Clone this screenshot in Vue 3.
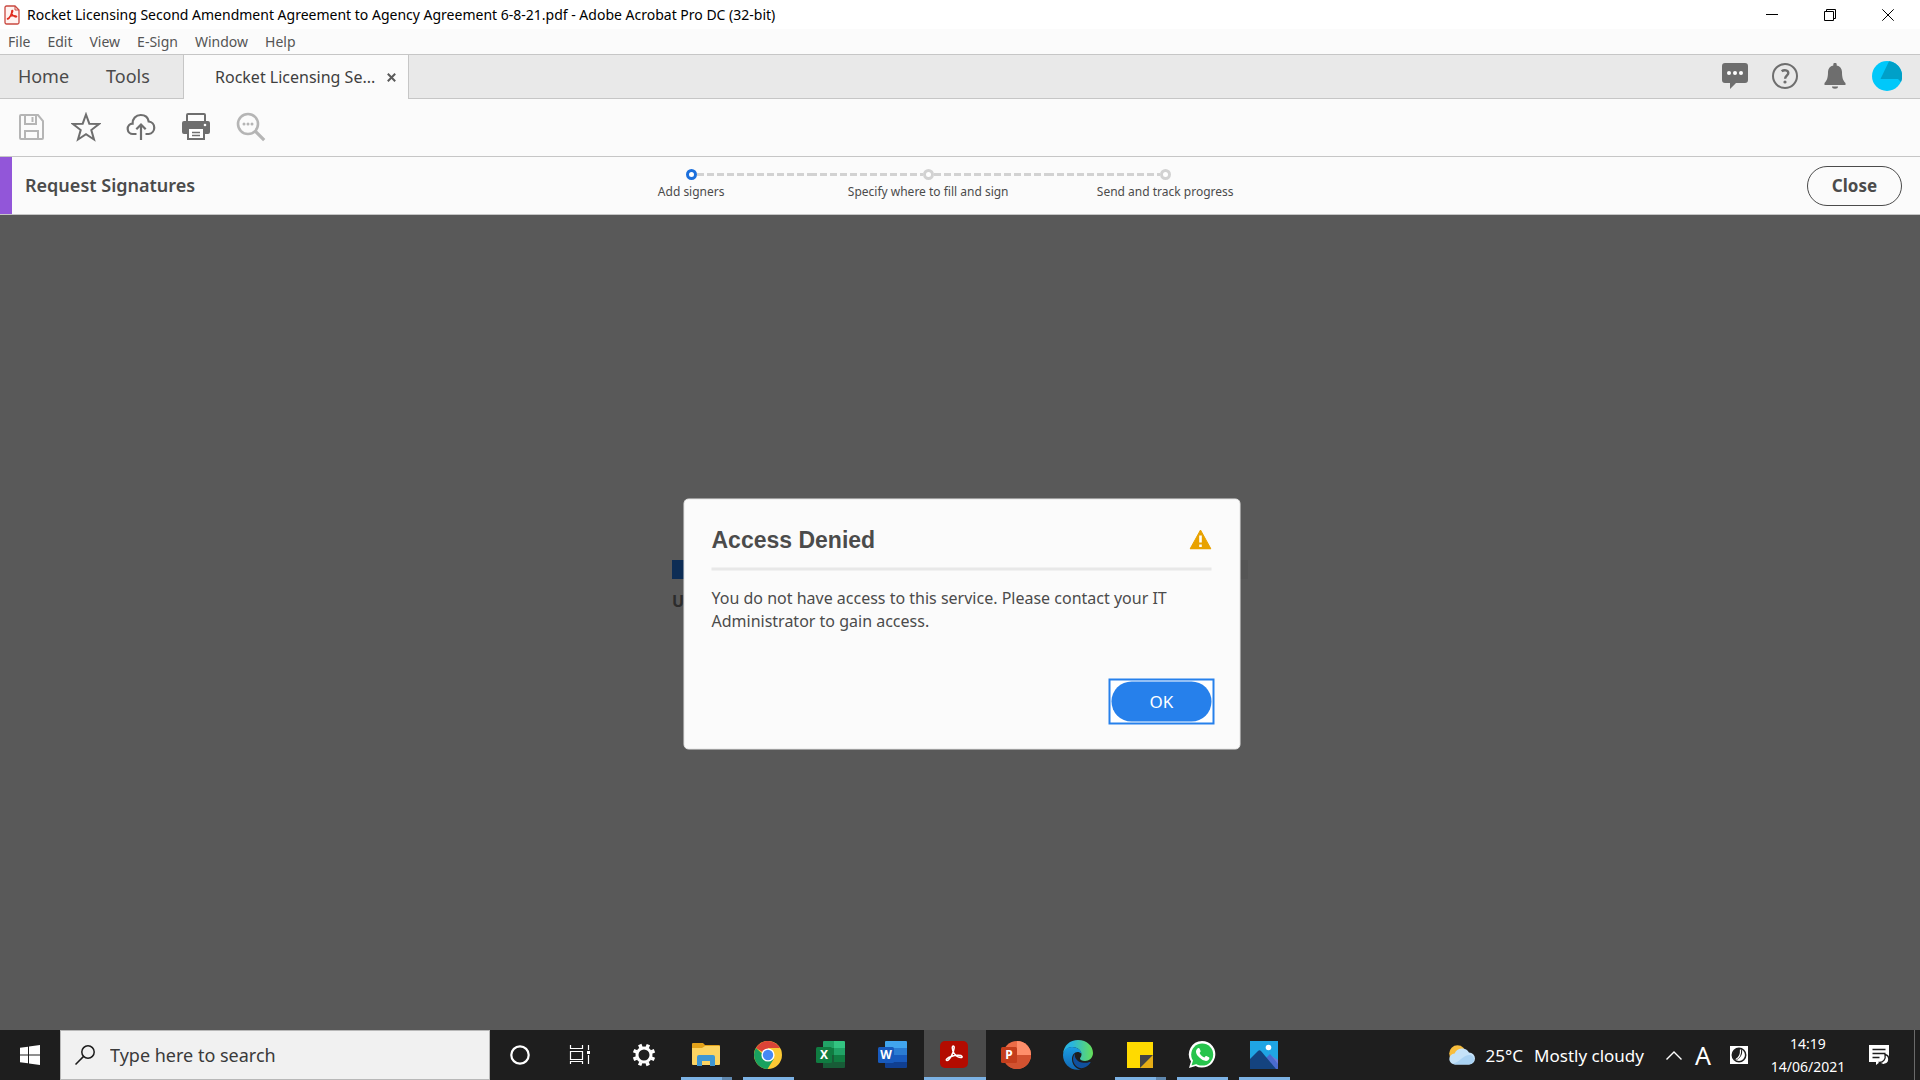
<script setup>
import { ref } from 'vue'

const menus = ['File', 'Edit', 'View', 'E-Sign', 'Window', 'Help']
const steps = ['Add signers', 'Specify where to fill and sign', 'Send and track progress']
const currentStep = ref(0)
const dialogOpen = ref(true)
const query = ref('')

const apps = [
  { id: 'cortana', label: 'Cortana' },
  { id: 'tasks', label: 'Task View' },
  { id: 'settings', label: 'Settings' },
  { id: 'explorer', label: 'File Explorer', open: true, stacked: true },
  { id: 'chrome', label: 'Google Chrome', open: true },
  { id: 'excel', label: 'Excel' },
  { id: 'word', label: 'Word' },
  { id: 'acrobat', label: 'Adobe Acrobat', open: true, active: true },
  { id: 'powerpoint', label: 'PowerPoint' },
  { id: 'edge', label: 'Microsoft Edge' },
  { id: 'notes', label: 'Sticky Notes', open: true, stacked: true },
  { id: 'whatsapp', label: 'WhatsApp', open: true },
  { id: 'photos', label: 'Photos', open: true }
]
</script>

<template>
  <div class="desktop">
    <header class="title-bar">
      <svg class="pdf-icon" width="16" height="20" viewBox="0 0 16 20">
        <path d="M2.500 1H11l4 4v12.500a1.500 1.500 0 0 1-1.500 1.500h-11A1.500 1.500 0 0 1 1 17.500v-15A1.500 1.500 0 0 1 2.500 1z" fill="#fff3f1" stroke="#c9483f" stroke-width="1.300" />
        <path d="M11 1v4h4" fill="none" stroke="#c9483f" />
        <path d="M3.500 13.500c2-.6 4.200-4.200 4.200-7.300 0-1.300 1.500-1 1 .4-.6 2-2.200 5-3.600 6.700-1 1.200-2.200.9-1.600.2zm1.800-1.700c2-.9 4.500-1.300 6.300-1 1.700.3 1.300 1.600-.2 1.200C9.600 11.500 8 9 7.800 7.400" fill="none" stroke="#e02d20" stroke-width="1.200" />
      </svg>
      <h1>Rocket Licensing Second Amendment Agreement to Agency Agreement 6-8-21.pdf - Adobe Acrobat Pro DC (32-bit)</h1>
      <div class="window-controls">
        <button aria-label="Minimize">
          <svg width="12" height="12" viewBox="0 0 12 12"><path d="M0 5.500h12" /></svg>
        </button>
        <button aria-label="Restore">
          <svg width="12" height="12" viewBox="0 0 12 12"><path d="M.5 2.500h9v9h-9zM2.500 2.500v-2h9v9h-2" /></svg>
        </button>
        <button aria-label="Close window">
          <svg width="12" height="12" viewBox="0 0 12 12"><path d="M.3.3l11.400 11.400M11.700.3L.3 11.700" /></svg>
        </button>
      </div>
    </header>

    <nav class="menu-bar">
      <button v-for="menu in menus" :key="menu">{{ menu }}</button>
    </nav>

    <div class="tab-bar">
      <button class="tab">Home</button>
      <button class="tab">Tools</button>
      <div class="document-tab">
        <button class="document-name">Rocket Licensing Se...</button>
        <button class="tab-close" aria-label="Close tab">
          <svg width="9" height="9" viewBox="0 0 9 9"><path d="M.8.8l7.400 7.400M8.200.8L.8 8.200" stroke="#5a5a5a" stroke-width="2" /></svg>
        </button>
      </div>
      <div class="account">
        <button aria-label="Comments">
          <svg width="26" height="26" viewBox="0 0 26 26">
            <path d="M3 0h20a3 3 0 0 1 3 3v14a3 3 0 0 1-3 3H14l-6 6v-6H3a3 3 0 0 1-3-3V3a3 3 0 0 1 3-3z" fill="#6e6e6e" />
            <g fill="#fff"><circle cx="7" cy="10" r="2" /><circle cx="13" cy="10" r="2" /><circle cx="19" cy="10" r="2" /></g>
          </svg>
        </button>
        <button aria-label="Help">
          <svg width="26" height="26" viewBox="0 0 26 26" fill="none" stroke="#6e6e6e">
            <circle cx="13" cy="13" r="12" stroke-width="2" />
            <path d="M9.700 8.300c2.300-1.900 6.600-1.300 6.600 1.800 0 2.400-3.200 2.900-3.200 5.600" stroke-width="2.400" />
            <circle cx="13" cy="19" r="1.600" fill="#6e6e6e" stroke="none" />
          </svg>
        </button>
        <button aria-label="Notifications">
          <svg width="26" height="26" viewBox="-2 0 26 26" fill="#6e6e6e">
            <path d="M9.300 1.500a1.700 1.700 0 0 1 3.400 0v1c3.400.7 5.300 3.200 5.300 6.500 0 5.500.8 8 3.500 11v2H.5v-2C3.200 17 4 14.500 4 9c0-3.300 1.900-5.800 5.300-6.500zM8 23.500h6a3 2.200 0 0 1-6 0z" />
          </svg>
        </button>
        <button aria-label="Profile">
          <svg width="30" height="30" viewBox="0 0 30 30">
            <circle cx="15" cy="15" r="15" fill="#00c8fa" />
            <path d="M17 .2A15 15 0 0 1 29 21l-3-3H8.500z" fill="#00a0c8" />
          </svg>
        </button>
      </div>
    </div>

    <div class="toolbar">
      <button aria-label="Save" disabled>
        <svg width="30" height="30" viewBox="0 0 30 30" fill="none" stroke="#b5b5b5" stroke-width="2">
          <path d="M5 3h17l5 6v17a1 1 0 0 1-1 1H5a1 1 0 0 1-1-1V4a1 1 0 0 1 1-1zM9 3v9h11V3M9 27v-8h13v8" />
          <path d="M16.500 5v5" />
        </svg>
      </button>
      <button aria-label="Star">
        <svg width="30" height="30" viewBox="0 0 30 30" fill="none" stroke="#6e6e6e" stroke-width="2">
          <path d="M15 2.500l3.300 9.200 9.700.3-7.700 6 2.700 9.500L15 22.200 7 27.500 9.700 18 2 12l9.700-.3z" />
        </svg>
      </button>
      <button aria-label="Upload">
        <svg width="30" height="30" viewBox="0 0 30 30" fill="none" stroke="#6e6e6e" stroke-width="2.200">
          <path d="M10.500 22H7.200a5.200 5.200 0 0 1-.6-10.400C6.400 6.800 9.800 3 14.700 3c4.300 0 7.400 2.600 8 6.500a6.300 6.300 0 0 1 .1 12.500h-3.300M15 28V13M10.300 17.300L15 12.500l4.700 4.800" />
        </svg>
      </button>
      <button aria-label="Print">
        <svg width="30" height="30" viewBox="0 0 30 30">
          <path d="M6 9V3a1 1 0 0 1 1-1h16a1 1 0 0 1 1 1v6" fill="none" stroke="#6e6e6e" stroke-width="2" />
          <path d="M3 9h24a2 2 0 0 1 2 2v9a2 2 0 0 1-2 2h-3v6H6v-6H3a2 2 0 0 1-2-2v-9a2 2 0 0 1 2-2z" fill="#6e6e6e" />
          <path d="M8 17h14v9H8z" fill="#fff" />
          <path d="M11 20.500h8M11 23.500h8" stroke="#6e6e6e" stroke-width="1.400" />
          <circle cx="24" cy="13" r="1.300" fill="#fff" />
        </svg>
      </button>
      <button aria-label="Find" disabled>
        <svg width="30" height="30" viewBox="0 0 30 30" fill="none" stroke="#b5b5b5">
          <circle cx="12" cy="12" r="10" stroke-width="2.600" />
          <path d="M19.200 19.200l9 9" stroke-width="3.200" />
          <g fill="#b5b5b5" stroke="none"><circle cx="8" cy="12" r="1.500" /><circle cx="12" cy="12" r="1.500" /><circle cx="16" cy="12" r="1.500" /></g>
        </svg>
      </button>
    </div>

    <section class="request-bar">
      <h2>Request Signatures</h2>
      <ol class="steps">
        <li v-for="(step, i) in steps" :key="step" :class="{ current: i === currentStep }">
          <span class="track"><span class="dot"></span></span>
          <span>{{ step }}</span>
        </li>
      </ol>
      <button class="close-request">Close</button>
    </section>

    <main class="stage">
      <div class="upload">
        <div class="progress"><div class="progress-fill"></div></div>
        <p>U</p>
      </div>
      <div v-if="dialogOpen" class="dialog" role="alertdialog" aria-labelledby="dialog-title">
        <div class="dialog-head">
          <h3 id="dialog-title">Access Denied</h3>
          <svg width="22" height="20" viewBox="0 0 22 20">
            <path d="M11 .5L21.500 19.500H.5z" fill="#e8a200" stroke="#e8a200" stroke-linejoin="round" />
            <path d="M11 6v7M11 15v2.500" stroke="#fff" stroke-width="2.600" />
          </svg>
        </div>
        <p>You do not have access to this service. Please contact your IT Administrator to gain access.</p>
        <button class="ok" @click="dialogOpen = false"><span>OK</span></button>
      </div>
    </main>

    <footer class="taskbar">
      <button class="start" aria-label="Start">
        <svg width="20" height="20" viewBox="0 0 20 20" fill="#fff">
          <path d="M0 2.800l8-1.100v7.800H0zM9 1.500L20 0v9.500H9zM0 10.500h8v7.800l-8-1.100zM9 10.500h11V20L9 18.500z" />
        </svg>
      </button>
      <label class="search">
        <svg width="20" height="20" viewBox="0 0 20 20" fill="none" stroke="#1c1c1c" stroke-width="1.500">
          <circle cx="13" cy="7" r="6.200" /><path d="M8.600 11.400L.5 19.500" />
        </svg>
        <input v-model="query" type="text" placeholder="Type here to search" aria-label="Search" />
      </label>

      <div class="apps">
        <button
          v-for="app in apps"
          :key="app.id"
          class="app"
          :class="{ open: app.open, active: app.active, stacked: app.stacked }"
          :aria-label="app.label"
        >
          <svg v-if="app.id === 'cortana'" width="30" height="30" viewBox="0 0 30 30">
            <circle cx="15" cy="15" r="8.700" fill="none" stroke="#fff" stroke-width="2.200" />
          </svg>
          <svg v-else-if="app.id === 'tasks'" width="30" height="30" viewBox="0 0 30 30" fill="none" stroke="#fff">
            <path d="M3.500 5v3.500h12V5M3.500 11.500h12v8h-12zM3.500 24v-2.500h12V24M21.500 5v5M21.500 15v9" stroke-width="1.200" />
            <path d="M20 11h3v3h-3z" fill="#fff" stroke="none" />
          </svg>
          <svg v-else-if="app.id === 'settings'" width="30" height="30" viewBox="0 0 30 30" fill="none" stroke="#fff">
            <circle cx="15" cy="15" r="7" stroke-width="3" />
            <g stroke-width="3.600">
              <path v-for="n in 8" :key="n" d="M15 7V3.700" :transform="`rotate(${n * 45 - 22} 15 15)`" />
            </g>
          </svg>
          <svg v-else-if="app.id === 'explorer'" width="30" height="30" viewBox="0 0 30 30">
            <path d="M1 4a1 1 0 0 1 1-1h10l2 2h14a1 1 0 0 1 1 1v17H1z" fill="#e3a21a" />
            <path d="M1 8h10l3-2h14a1 1 0 0 1 1 1v17a1 1 0 0 1-1 1H2a1 1 0 0 1-1-1z" fill="#fcd462" />
            <path d="M6 26v-9a2 2 0 0 1 2-2h14a2 2 0 0 1 2 2v9h-5v-5h-8v5z" fill="#3f97d3" />
          </svg>
          <svg v-else-if="app.id === 'chrome'" width="30" height="30" viewBox="0 0 30 30">
            <circle cx="15" cy="15" r="14" fill="#fcc934" />
            <path d="M15 15L2.900 8A14 14 0 0 1 27.100 8H15z" fill="#db4437" />
            <path d="M2.900 8A14 14 0 0 0 14.500 29l6.500-10.500-6 .5z" fill="#19a15f" />
            <circle cx="15" cy="15" r="6.600" fill="#fff" />
            <circle cx="15" cy="15" r="5.200" fill="#4688f4" />
          </svg>
          <svg v-else-if="app.id === 'excel'" width="30" height="30" viewBox="0 0 30 30">
            <path d="M8 2a1 1 0 0 1 1-1h10v7H8z" fill="#21a366" /><path d="M19 1h10a1 1 0 0 1 1 1v6H19z" fill="#33c481" />
            <path d="M8 8h11v7H8z" fill="#107c41" /><path d="M19 8h11v7H19z" fill="#21a366" />
            <path d="M8 15h11v13H8z" fill="#185c37" /><path d="M19 15h11v7H19z" fill="#107c41" /><path d="M9 22h21v5a1 1 0 0 1-1 1H9z" fill="#185c37" />
            <rect x="1" y="7" width="16" height="16" rx="1.500" fill="#107c41" />
            <text x="9" y="19" text-anchor="middle" class="glyph">X</text>
          </svg>
          <svg v-else-if="app.id === 'word'" width="30" height="30" viewBox="0 0 30 30">
            <path d="M8 2a1 1 0 0 1 1-1h20a1 1 0 0 1 1 1v6H8z" fill="#41a5ee" /><path d="M8 8h22v7H8z" fill="#2b7cd3" />
            <path d="M8 15h22v7H8z" fill="#185abd" /><path d="M8 22h22v5a1 1 0 0 1-1 1H9a1 1 0 0 1-1-1z" fill="#103f91" />
            <rect x="1" y="7" width="16" height="16" rx="1.500" fill="#185abd" />
            <text x="9" y="19" text-anchor="middle" class="glyph">W</text>
          </svg>
          <svg v-else-if="app.id === 'acrobat'" width="30" height="30" viewBox="0 0 30 30">
            <rect x="1" y="1" width="28" height="27" rx="5" fill="#b30b00" />
            <path d="M8 20.500c-2-.6.5-2.800 4.200-4 4.300-1.400 9.800-1.700 10.800-.2.800 1.500-2 1.600-4.400.3-2.800-1.600-5-5.200-5.300-8.600-.2-2.600 2-2.500 1.900-.2-.2 4.400-4.800 12.900-7.200 12.700z" fill="none" stroke="#fff" stroke-width="1.500" />
          </svg>
          <svg v-else-if="app.id === 'powerpoint'" width="30" height="30" viewBox="0 0 30 30">
            <circle cx="16" cy="15" r="14" fill="#ed6c47" /><path d="M16 1a14 14 0 0 1 14 14H16z" fill="#ff8f6b" />
            <path d="M2 15h28a14 14 0 0 1-28 0z" fill="#d35230" />
            <rect x="0" y="7" width="16" height="16" rx="1.500" fill="#c43e1c" />
            <text x="8" y="19" text-anchor="middle" class="glyph">P</text>
          </svg>
          <svg v-else-if="app.id === 'edge'" width="30" height="30" viewBox="0 0 30 30">
            <defs>
              <linearGradient id="edge-top"><stop offset=".3" stop-color="#29b5df" /><stop offset="1" stop-color="#66df58" /></linearGradient>
              <linearGradient id="edge-side" x2="0" y2="1"><stop stop-color="#1a9de2" /><stop offset="1" stop-color="#1267b4" /></linearGradient>
            </defs>
            <path d="M0 14C1 5 7 0 15 0c9 0 15 6 15 13 0 5-4 8-8 8-3 0-5-1-5-2.500 0-1 1.500-1.500 1.500-4C18.500 10 14 7 9 7c-4 0-7.500 3-9 7z" fill="url(#edge-top)" />
            <path d="M0 15C.5 10 4 7 9 7c5 0 9.500 3 9.500 7-1-1.500-2.500-2-4-2-3 0-5.500 3-5.500 7 0 6 4 10 9 10.500C8 31.500 0 24 0 15z" fill="url(#edge-side)" />
            <path d="M12 13.500c-4 5-1.500 12 4 14.200 4 1.500 8-.7 11.300-4.700.5-.8 0-1.300-.8-1-5 2-12 .5-14-4-.7-1.500-.8-3-.5-4.500z" fill="#10509e" />
          </svg>
          <svg v-else-if="app.id === 'notes'" width="30" height="30" viewBox="0 0 30 30">
            <path d="M2 2h26v26H2z" fill="#ffda00" /><path d="M15 28h13V15z" fill="#e6ad16" /><path d="M15 15h13L15 28z" fill="#444" />
          </svg>
          <svg v-else-if="app.id === 'whatsapp'" width="30" height="30" viewBox="0 0 30 30">
            <path d="M15 1a13.300 13.300 0 1 1-6.300 25L2 28l2-6.500A13.300 13.300 0 0 1 15 1z" fill="#fff" />
            <circle cx="15.200" cy="14.600" r="11" fill="#26c44c" /><path d="M4.500 25.500l2-6.500 4 4.800z" fill="#26c44c" />
            <path d="M10.500 8.500c1-.8 1.800-.6 2.200.3l.9 2.200c.2.600-.2 1-1 2 1 2.200 2.700 3.700 4.800 4.500.8-.9 1.300-1.700 2-1.400l2.500 1.200c1 .5.4 2-.5 2.800-2.300 2-6.300.2-9-2.500-3.400-3.300-4.600-6.600-1.900-9.100z" fill="#fff" />
          </svg>
          <svg v-else width="30" height="30" viewBox="0 0 30 30">
            <path d="M1 1h28v28H1z" fill="#1fa5e4" />
            <path d="M12 25l9-10 8 5v9H12z" fill="#6c7ad8" /><path d="M17 18l4-4 8 10v5H17z" fill="#4a6bce" />
            <path d="M1 19l8-8c1-1 2-1 3 0l15 18H1z" fill="#14437f" />
            <circle cx="19.500" cy="7.500" r="2.800" fill="#fff" />
          </svg>
        </button>
      </div>

      <div class="tray">
        <button class="weather">
          <svg width="26" height="20" viewBox="0 0 26 20">
            <circle cx="8.500" cy="8.500" r="8.300" fill="#f8bd3c" />
            <path d="M6 19.500a5.500 5.500 0 0 1-.4-11A8 8 0 0 1 20 7.500a6 6 0 0 1 0 12z" fill="#c5e2f8" />
            <path d="M4 18.500c7-1 9-8 16-8.500 3 0 5 2 5 4.500a5 5 0 0 1-5 5H6z" fill="#a9d2f3" />
          </svg>
          <span>25°C</span>
          <span>Mostly cloudy</span>
        </button>
        <button class="chevron" aria-label="Show hidden icons">
          <svg width="16" height="9" viewBox="0 0 16 9"><path d="M.5 8.500L8 1l7.500 7.500" fill="none" stroke="#fff" stroke-width="1.400" /></svg>
        </button>
        <button class="ime">A</button>
        <button class="moon" aria-label="Input mode">
          <svg width="18" height="18" viewBox="0 0 18 18">
            <path d="M0 0h18v18H0z" fill="#fff" />
            <circle cx="9" cy="9" r="6.700" fill="#fff" stroke="#1e1e1e" stroke-width="1.500" />
            <path d="M9 2.300h2.200c2 3.700 1 8.500-3.700 11.200-2 .6-3.300 0-4-1.200A6.700 6.700 0 0 1 9 2.300z" fill="#1e1e1e" />
            <path d="M10.500 3.500c.3 4.500-.5 8-4.500 9.700" fill="none" stroke="#fff" stroke-width="1.200" />
          </svg>
        </button>
        <button class="clock"><span>14:19</span><span>14/06/2021</span></button>
        <button class="action-center" aria-label="Notifications">
          <svg width="22" height="22" viewBox="0 0 22 22">
            <path d="M1 1h20v17h-9l-4 3v-3H1z" fill="#fff" />
            <path d="M4.500 5.500h13M4.500 9.500h13M4.500 13.500h7" stroke="#1e1e1e" stroke-width="1.300" />
            <path d="M17 10.500c5 1 5.500 9-1 10-2 .2-3.500-.7-4.500-2 4 0 6.500-3.500 5.500-8z" fill="#fff" stroke="#1e1e1e" stroke-width="1.300" />
          </svg>
        </button>
        <button class="show-desktop" aria-label="Show desktop"></button>
      </div>
    </footer>
  </div>
</template>

<style>
body {
  margin: 0;
}
</style>

<style scoped>
.desktop {
  display: flex;
  flex-direction: column;
  min-height: 100vh;
  background: #fbfbfb;
  color: #4b4b4b;
  font-family: "Noto Sans", "Open Sans", sans-serif;
  font-size: 14px;
}

.desktop * {
  box-sizing: border-box;
}

h1,
h2,
h3,
p,
ol {
  margin: 0;
  padding: 0;
}

button {
  padding: 0;
  border: 0;
  background: none;
  color: inherit;
  font: inherit;
}

svg {
  display: block;
  flex: none;
}

.title-bar {
  display: flex;
  align-items: center;
  height: 29px;
  padding: 0 3px 0 4px;
  background: #fff;
  color: #000;
}

.title-bar h1 {
  flex: 1;
  margin-left: 7px;
  font-size: 14px;
  font-weight: 400;
  line-height: 28px;
}

.window-controls {
  display: flex;
}

.window-controls button {
  display: grid;
  place-items: center;
  width: 58px;
  height: 28px;
}

.window-controls path {
  fill: none;
  stroke: #000;
}

.menu-bar {
  display: flex;
  gap: 17px;
  height: 25px;
  padding-left: 8px;
  color: #555;
}

.tab-bar {
  display: flex;
  height: 45px;
  border: solid #c6c6c6;
  border-width: 1px 0;
  background: #e9e9e9;
  font-size: 18px;
}

.tab {
  width: 87px;
  padding-bottom: 2px;
}

.tab + .tab {
  width: 96px;
  padding-right: 14px;
}

.document-tab {
  display: flex;
  align-items: center;
  gap: 12px;
  width: 226px;
  margin-bottom: -1px;
  padding-left: 31px;
  border: solid #c6c6c6;
  border-width: 0 1px;
  background: #fbfbfb;
  color: #3f3f3f;
  font-size: 16px;
}

.account {
  display: flex;
  align-items: center;
  gap: 24px;
  margin-left: auto;
  padding: 0 18px 2px 0;
}

.toolbar {
  display: flex;
  height: 58px;
  padding-left: 3px;
  border-bottom: 1px solid #c6c6c6;
}

.toolbar button {
  display: grid;
  place-items: center;
  width: 55px;
  height: 56px;
}

.request-bar {
  display: grid;
  grid-template-columns: 9fr 711px 10fr;
  align-items: center;
  height: 58px;
  border-bottom: 1px solid #c6c6c6;
}

.request-bar h2 {
  padding-left: 13px;
  border-left: 12px solid #9256d9;
  font-size: 18px;
  font-weight: 600;
  line-height: 57px;
}

.steps {
  display: grid;
  grid-template-columns: repeat(3, 1fr);
  list-style: none;
  font-size: 12px;
  line-height: 22px;
  text-align: center;
}

.track {
  display: flex;
  align-items: center;
  justify-content: center;
  height: 12px;
}

.track::before,
.track::after {
  content: "";
  flex: 1;
  height: 3px;
  background: repeating-linear-gradient(90deg, #d2d2d2 0 7px, transparent 7px 10px);
}

li:first-child .track::before,
li:last-child .track::after {
  visibility: hidden;
}

.dot {
  width: 11px;
  height: 11px;
  border: 3px solid #d2d2d2;
  border-radius: 50%;
  background: #fff;
}

.current .dot {
  border-color: #1b6fdc;
}

.close-request {
  justify-self: end;
  width: 95px;
  height: 40px;
  margin-right: 18px;
  border: 1px solid #4b4b4b;
  border-radius: 20px;
  font-size: 17px;
  font-weight: 700;
}

.stage {
  position: relative;
  display: grid;
  flex: 1;
  place-items: center;
  background: #595959;
}

.upload {
  width: 576px;
  padding-bottom: 74px;
  color: #2c2c2c;
  font-size: 16px;
  font-weight: 700;
}

.progress {
  height: 19px;
  margin-bottom: 11px;
  background: #555;
}

.progress-fill {
  width: 40%;
  height: 100%;
  background: #0d2d55;
}

.dialog {
  position: absolute;
  top: 50%;
  left: 50%;
  width: 557px;
  margin: 1px 0 0 2px;
  padding: 30px 28px 28px 27px;
  border: 1px solid #e4e4e4;
  border-radius: 5px;
  background: #fbfbfb;
  transform: translate(-50%, -50%);
}

.dialog-head {
  display: flex;
  align-items: center;
  justify-content: space-between;
  height: 41px;
  padding-bottom: 17px;
  border-bottom: 3px solid #e8e8e8;
}

.dialog h3 {
  font-family: "Liberation Sans", Arial, sans-serif;
  font-size: 23px;
  font-weight: 700;
}

.dialog p {
  margin: 16px 0 46px;
  font-size: 16px;
  line-height: 23px;
}

.ok {
  display: block;
  margin: 0 -3px -4px auto;
  padding: 1px;
  border: 2px solid #2680eb;
  background: #fff;
}

.ok span {
  display: block;
  width: 100px;
  border-radius: 20px;
  background: #2680eb;
  color: #fff;
  font-size: 17px;
  line-height: 40px;
}

.taskbar {
  display: flex;
  height: 50px;
  background: #1e1e1e;
  color: #fff;
}

.start {
  display: grid;
  place-items: center;
  width: 60px;
}

.search {
  display: flex;
  align-items: center;
  gap: 15px;
  width: 430px;
  padding-left: 14px;
  border: 1px solid #b8b8b8;
  background: #f1f1f1;
}

.search input {
  flex: 1;
  padding: 0;
  border: 0;
  outline: 0;
  background: none;
  font: inherit;
  font-size: 18px;
}

.search input::placeholder {
  color: #3a3a3a;
  opacity: 1;
}

.apps {
  display: flex;
}

.app {
  position: relative;
  display: grid;
  place-items: center;
  width: 62px;
  padding-right: 2px;
}

.app.active {
  background: #4b4b4b;
}

.app.open::after {
  content: "";
  position: absolute;
  right: 6px;
  bottom: 0;
  left: 5px;
  height: 3px;
  background: #7cb2e4;
}

.app.active::after {
  right: 0;
  left: 0;
}

.app.stacked::after {
  background: linear-gradient(90deg, #7cb2e4 41px, #5f87ad 41px);
}

.glyph {
  fill: #fff;
  font-size: 12px;
  font-weight: 700;
}

.tray {
  display: flex;
  align-items: center;
  margin-left: auto;
}

.weather {
  display: flex;
  align-items: center;
  gap: 11px;
  margin-right: 22px;
  font-size: 17px;
}

.chevron {
  margin-right: 13px;
}

.ime {
  width: 16px;
  margin-right: 19px;
  font-size: 25px;
  line-height: 50px;
}

.clock {
  display: flex;
  flex-direction: column;
  align-items: center;
  width: 120px;
  line-height: 23px;
}

.show-desktop {
  align-self: stretch;
  width: 6px;
  margin-left: 24px;
  border-left: 1px solid #6a6a6a;
}
</style>
